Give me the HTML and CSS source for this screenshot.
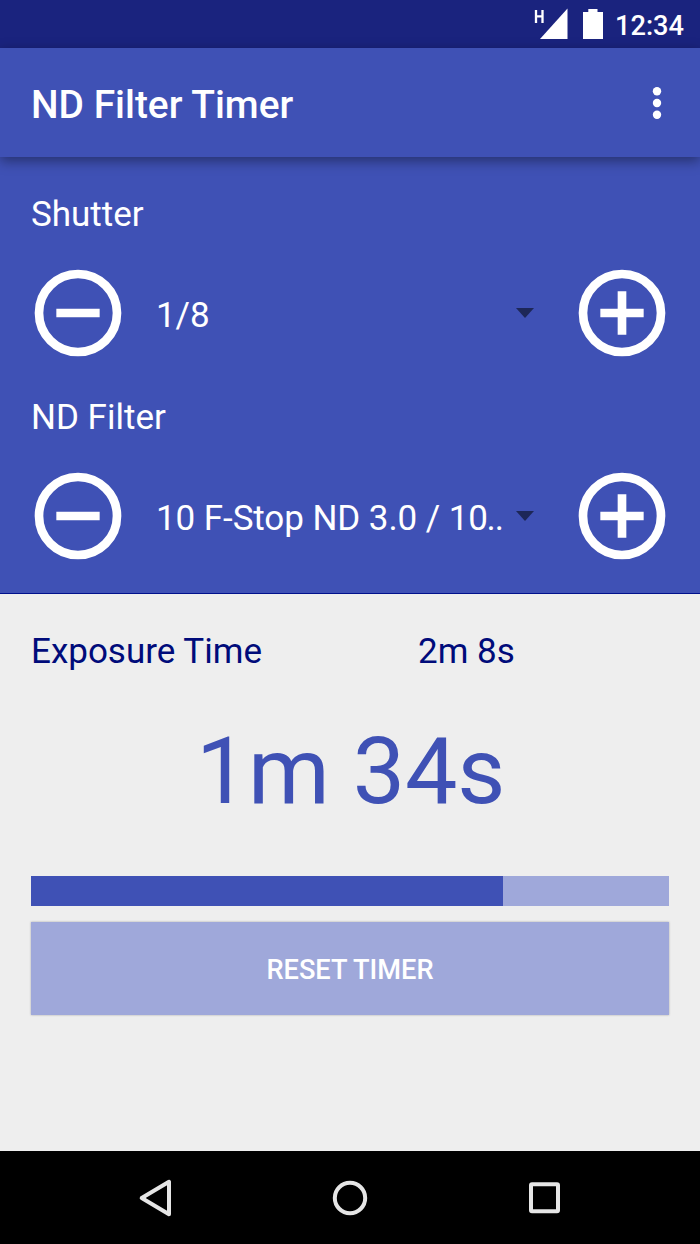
FILE: index.html
```
<!DOCTYPE html>
<html lang="en">
<head>
    <meta charset="UTF-8">
    <meta name="viewport" content="width=device-width, initial-scale=1.0">
    <title>ND Filter Timer</title>
    <link rel="stylesheet" href="styles.css">
</head>
<body>
    <div class="status-bar">
        <svg class="signal" width="36" height="34" viewBox="0 0 36 34">
            <path d="M33.500 1.500v30.500H6z" fill="#fff"/>
            <path d="M2 3v13M8.500 3v13M2 9.300h6.500" fill="none" stroke="#fff" stroke-width="2.300"/>
        </svg>
        <svg class="battery" width="20" height="30" viewBox="0 0 20 30">
            <path d="M5.300 0h9.200v3H20v27H0V3h5.300z" fill="#fff"/>
        </svg>
        <span class="clock">12:34</span>
    </div>

    <header class="toolbar">
        <h1>ND Filter Timer</h1>
        <button class="menu-button" aria-label="More options">
            <svg width="10" height="34" viewBox="0 0 10 34">
                <circle cx="5" cy="5.300" r="4.200"/>
                <circle cx="5" cy="17" r="4.200"/>
                <circle cx="5" cy="28.700" r="4.200"/>
            </svg>
        </button>
    </header>

    <section class="settings">
        <h2>Shutter</h2>
        <div class="row">
            <button class="step" aria-label="Decrease shutter">
                <svg viewBox="0 0 24 24"><circle cx="12" cy="12" r="9"/><path d="M7 12h10"/></svg>
            </button>
            <div class="spinner"><span class="value">1/8</span><i class="arrow"></i></div>
            <button class="step" aria-label="Increase shutter">
                <svg viewBox="0 0 24 24"><circle cx="12" cy="12" r="9"/><path d="M7 12h10M12 7v10"/></svg>
            </button>
        </div>

        <h2>ND Filter</h2>
        <div class="row">
            <button class="step" aria-label="Decrease filter">
                <svg viewBox="0 0 24 24"><circle cx="12" cy="12" r="9"/><path d="M7 12h10"/></svg>
            </button>
            <div class="spinner"><span class="value">10 F-Stop ND 3.0 / 10<span class="dots">..</span></span><i class="arrow"></i></div>
            <button class="step" aria-label="Increase filter">
                <svg viewBox="0 0 24 24"><circle cx="12" cy="12" r="9"/><path d="M7 12h10M12 7v10"/></svg>
            </button>
        </div>
    </section>

    <main class="timer">
        <div class="exposure">
            <span>Exposure Time</span>
            <span>2m 8s</span>
        </div>
        <div class="remaining">1m 34s</div>
        <div class="progress"><div class="progress-fill" style="width: 74%"></div></div>
        <button class="reset">RESET TIMER</button>
    </main>

    <nav class="nav-bar">
        <svg width="36" height="40" viewBox="0 0 36 40"><path d="M32 3.800v32.400L4.700 20z"/></svg>
        <svg width="36" height="40" viewBox="0 0 36 40"><circle cx="18" cy="20" r="15.200"/></svg>
        <svg width="36" height="40" viewBox="0 0 36 40"><rect x="4" y="6.300" width="27" height="27" rx="1"/></svg>
    </nav>
</body>
</html>
```
FILE: styles.css
```
* {
    box-sizing: border-box;
}

body {
    margin: 0;
    height: 1244px;
    display: flex;
    flex-direction: column;
    font-family: Roboto, sans-serif;
    font-size: 35px;
    line-height: 42px;
    background-color: #eeeeee;
}

h1, h2 {
    margin: 0;
    font-weight: 400;
}

button {
    padding: 0;
    border: none;
    background: none;
    color: #fff;
    font-family: inherit;
    cursor: pointer;
}

svg {
    display: block;
}

.status-bar {
    height: 48px;
    padding-right: 16px;
    display: flex;
    justify-content: flex-end;
    align-items: flex-start;
    background-color: #1a237e;
    color: #fff;
}

.signal {
    margin-top: 7px;
    margin-right: 13px;
}

.battery {
    margin-top: 9px;
    margin-right: 12px;
}

.clock {
    margin-top: 5px;
    font-size: 27.2px;
    font-weight: 500;
}

.toolbar {
    position: relative;
    height: 109px;
    padding: 3px 38px 0 31px;
    display: flex;
    justify-content: space-between;
    align-items: center;
    background-color: #3f51b5;
    color: #fff;
    box-shadow: 0 4px 12px rgba(0, 0, 0, 0.4);
}

.toolbar h1 {
    padding-top: 1px;
    font-size: 38.9px;
    font-weight: 500;
}

.menu-button {
    margin-bottom: 3px;
}

.menu-button svg {
    fill: #fff;
}

.settings {
    height: 437px;
    padding: 37px 26px 0;
    background-color: #3f51b5;
    border-bottom: 1px solid #00108c;
    color: #fff;
}

.settings h2 {
    padding-left: 5px;
    font-size: 35px;
}

.row {
    display: flex;
    align-items: center;
    margin: 25.3px 0 31.7px;
}

.step svg {
    width: 104px;
    height: 104px;
    fill: none;
    stroke: #fff;
    stroke-width: 2;
}

.spinner {
    flex: 1;
    display: flex;
    justify-content: space-between;
    align-items: center;
    padding: 0 36px 0 26px;
    white-space: nowrap;
}

.value {
    padding-top: 5px;
    letter-spacing: -0.08px;
}

.dots {
    margin-left: -1.5px;
    letter-spacing: -0.9px;
}

.arrow {
    border: 9.5px solid transparent;
    border-top: 10px solid #1d2758;
    border-bottom: 0;
}

.timer {
    flex: 1;
    padding: 37px 31px 0;
}

.exposure {
    display: grid;
    grid-template-columns: 387px 1fr;
    color: #000b7a;
}

.remaining {
    margin-top: 43px;
    padding-left: 1px;
    font-size: 93.3px;
    line-height: 110px;
    letter-spacing: -0.2px;
    text-align: center;
    color: #3f51b5;
}

.progress {
    height: 30px;
    margin-top: 50px;
    background-color: #9fa8da;
}

.progress-fill {
    height: 100%;
    background-color: #3f51b5;
}

.reset {
    display: block;
    width: 100%;
    height: 93px;
    margin-top: 16px;
    padding-top: 2px;
    background-color: #9fa8da;
    box-shadow: 0 0 2px rgba(0, 0, 0, 0.3);
    font-size: 27.2px;
    font-weight: 500;
}

.nav-bar {
    height: 93px;
    padding: 0 137px;
    display: flex;
    justify-content: space-between;
    align-items: center;
    background-color: #000;
}

.nav-bar svg {
    fill: none;
    stroke: #e6e6e6;
    stroke-width: 4;
    stroke-linejoin: round;
}
```
